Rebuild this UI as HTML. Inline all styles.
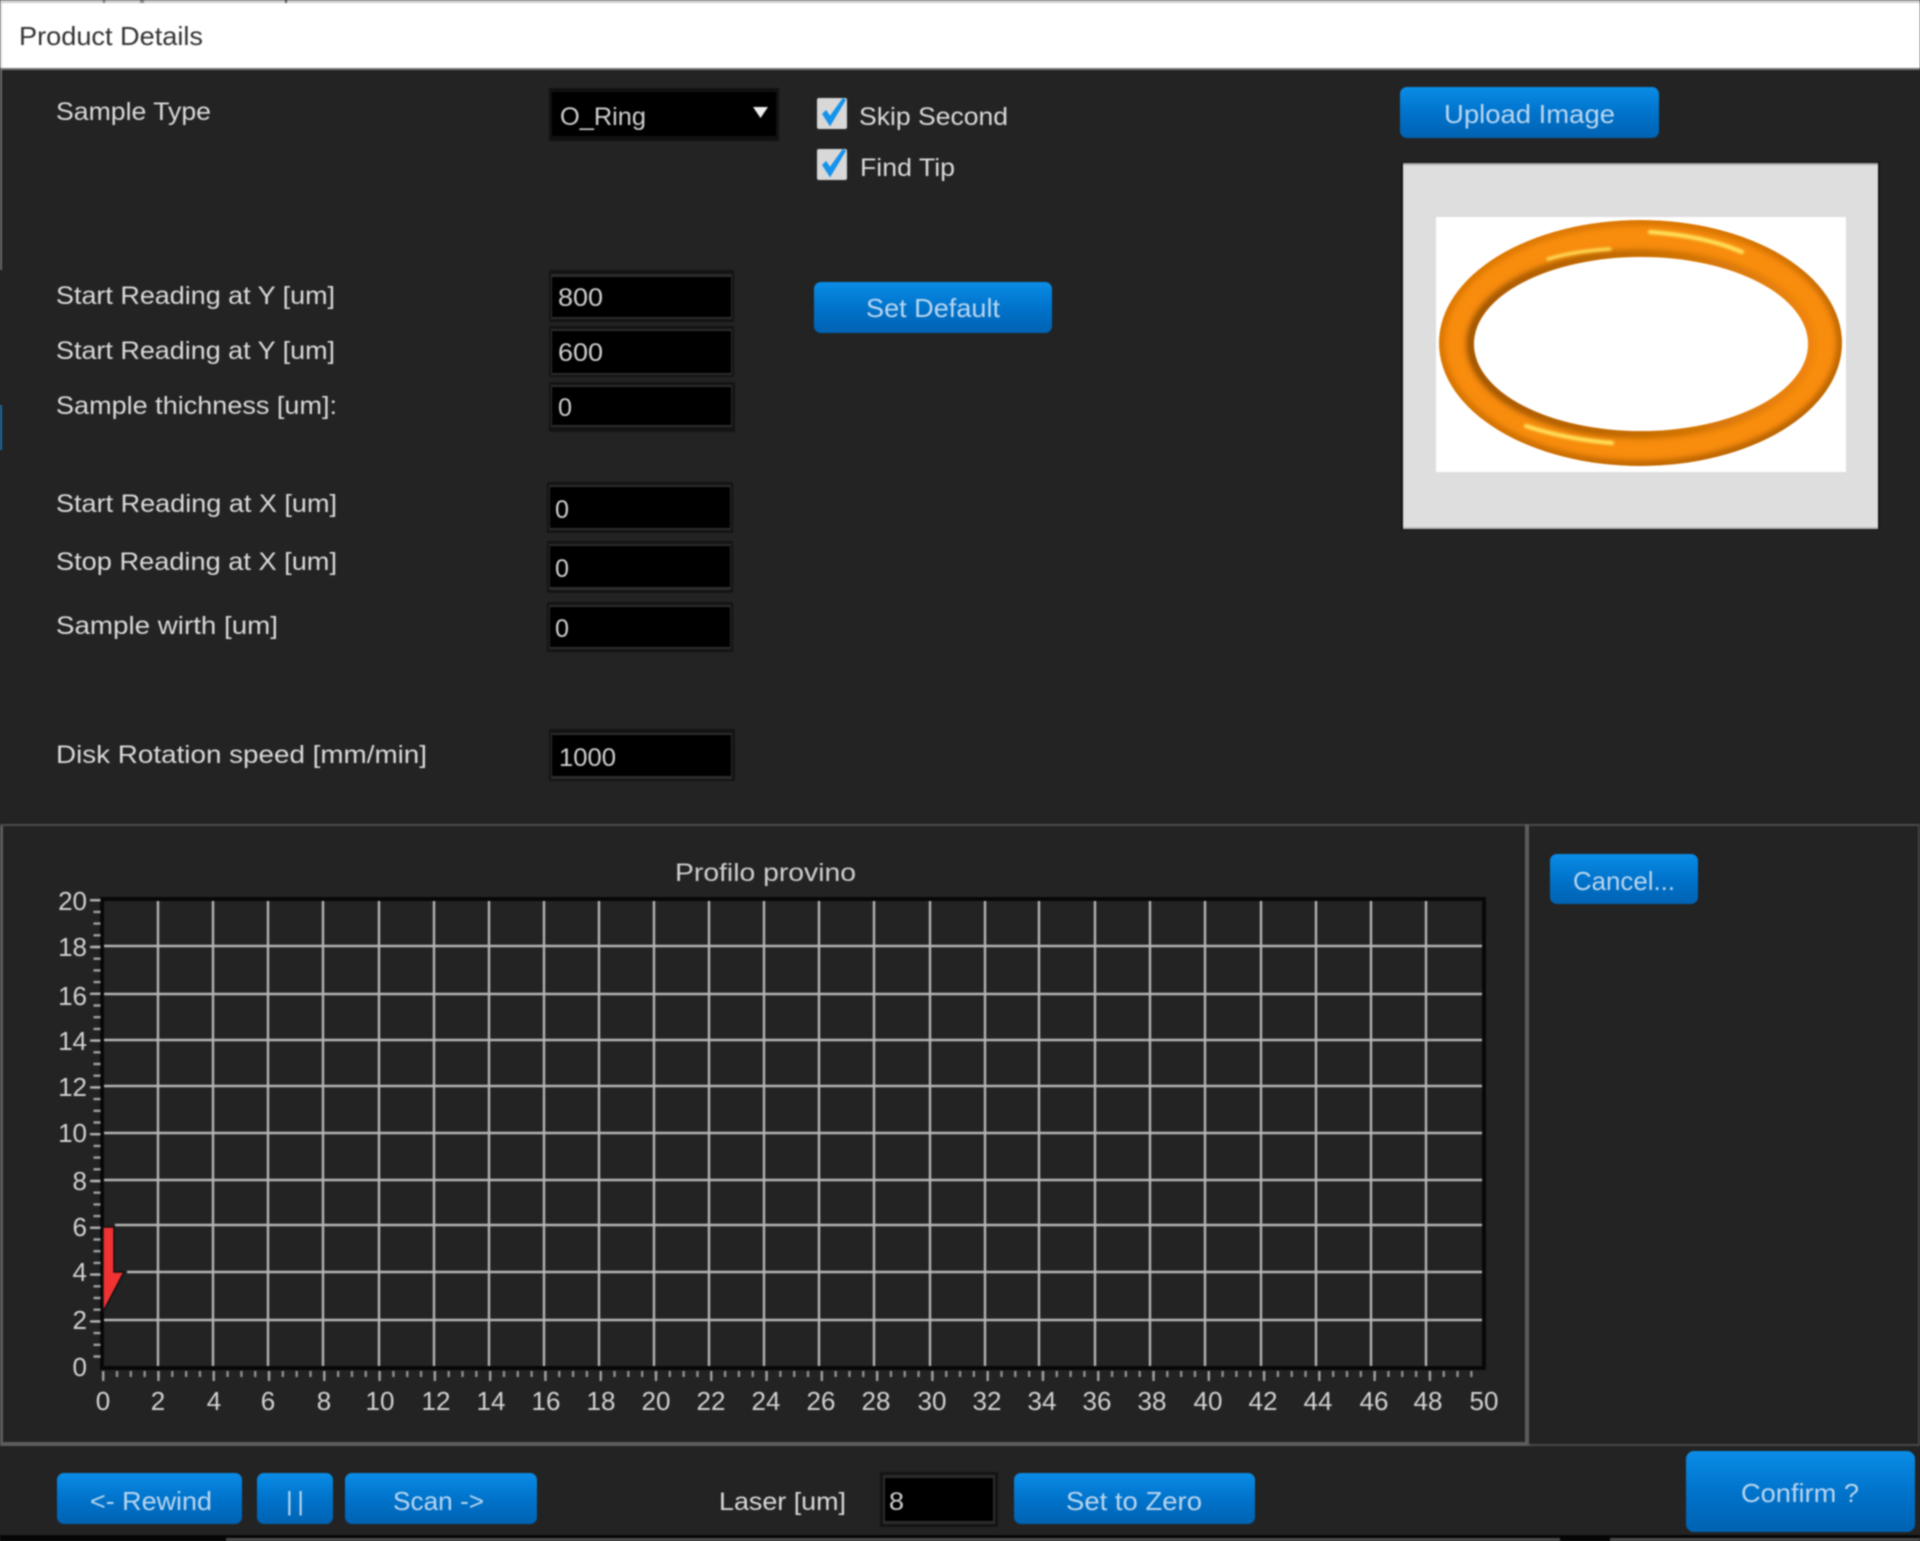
<!DOCTYPE html>
<html lang="en">
<head>
<meta charset="utf-8">
<title>Product Details</title>
<style>
html,body{margin:0;padding:0;background:#232323;width:1920px;height:1541px;overflow:hidden}
svg{display:block;filter:blur(.9px)}
text{font-family:"Liberation Sans",sans-serif}
.l{font-size:25px;fill:#dadada}
.i{font-size:25px;fill:#d0d0d0}
.b{font-size:26px;fill:#b9d6f0}
.t{font-size:26px;fill:#d2d2d2}
.m{text-anchor:middle}
.e{text-anchor:end}
</style>
</head>
<body>
<svg width="1920" height="1541" viewBox="0 0 1920 1541" xmlns="http://www.w3.org/2000/svg">
<defs>
<linearGradient id="bt" x1="0" y1="0" x2="0" y2="1">
<stop offset="0" stop-color="#0a8ce6"/><stop offset=".5" stop-color="#0073cb"/><stop offset="1" stop-color="#0062b2"/>
</linearGradient>
<linearGradient id="outerShade" x1="0" y1="0" x2="1" y2="1">
<stop offset="0" stop-color="#e07a07"/><stop offset=".5" stop-color="#cf7006"/><stop offset="1" stop-color="#a85a04"/>
</linearGradient>
<linearGradient id="innerShade" x1="0" y1="0" x2="1" y2="0">
<stop offset="0" stop-color="#9c5203"/><stop offset=".5" stop-color="#c06a05"/><stop offset="1" stop-color="#ee8409"/>
</linearGradient>
<clipPath id="ringClip"><ellipse cx="1640.5" cy="343" rx="201.5" ry="123"/></clipPath>
<filter id="sf" x="-20%" y="-300%" width="140%" height="700%"><feGaussianBlur stdDeviation="1.4"/></filter>
<filter id="rb" x="-10%" y="-10%" width="120%" height="120%"><feGaussianBlur stdDeviation="3"/></filter>
</defs>
<rect width="1920" height="1541" fill="#232323"/>

<!-- title bar -->
<rect x="0" y="0" width="1920" height="4" fill="#cfcfcf"/>
<rect x="103" y="0" width="2" height="3" fill="#777"/><rect x="140" y="0" width="4" height="3" fill="#888"/><rect x="285" y="0" width="2" height="3" fill="#555"/>
<rect x="2" y="3" width="1918" height="65" fill="#fff"/>
<rect x="0" y="3" width="2" height="65" fill="#ddd"/>
<rect x="0" y="68" width="1920" height="2" fill="#777"/>
<text x="19" y="45" style="font-size:26px;fill:#333" textLength="184" lengthAdjust="spacingAndGlyphs">Product Details</text>
<rect x="0" y="70" width="2" height="200" fill="#6a6a6a"/>
<rect x="0" y="405" width="2" height="45" fill="#1c6ea4"/>

<!-- labels -->
<text class="l" x="56" y="120" textLength="155" lengthAdjust="spacingAndGlyphs">Sample Type</text>
<text class="l" x="56" y="304" textLength="279" lengthAdjust="spacingAndGlyphs">Start Reading at Y [um]</text>
<text class="l" x="56" y="359" textLength="279" lengthAdjust="spacingAndGlyphs">Start Reading at Y [um]</text>
<text class="l" x="56" y="414" textLength="281" lengthAdjust="spacingAndGlyphs">Sample thichness [um]:</text>
<text class="l" x="56" y="512" textLength="281" lengthAdjust="spacingAndGlyphs">Start Reading at X [um]</text>
<text class="l" x="56" y="570" textLength="281" lengthAdjust="spacingAndGlyphs">Stop Reading at X [um]</text>
<text class="l" x="56" y="634" textLength="222" lengthAdjust="spacingAndGlyphs">Sample wirth [um]</text>
<text class="l" x="56" y="763" textLength="371" lengthAdjust="spacingAndGlyphs">Disk Rotation speed [mm/min]</text>

<!-- combo -->
<rect x="549" y="88" width="230" height="53" fill="#111"/>
<rect x="552" y="92" width="224" height="44" fill="#000"/>
<text class="i" x="560" y="125" textLength="86" lengthAdjust="spacingAndGlyphs">O_Ring</text>
<path d="M753 107H768L760.5 118Z" fill="#eee"/>

<!-- inputs -->
<g fill="#141414">
<rect x="549" y="270" width="185" height="52"/>
<rect x="549" y="326" width="185" height="51"/>
<rect x="549" y="382" width="186" height="50"/>
<rect x="547" y="482" width="186" height="51"/>
<rect x="547" y="541" width="186" height="52"/>
<rect x="547" y="602" width="186" height="50"/>
<rect x="549" y="729" width="186" height="52"/>
<rect x="880" y="1472" width="118" height="55"/>
</g>
<g fill="#2c2c2c">
<rect x="551" y="274" width="181" height="45"/>
<rect x="551" y="329" width="181" height="46"/>
<rect x="551" y="385" width="181" height="42"/>
<rect x="549" y="485" width="182" height="45"/>
<rect x="549" y="544" width="182" height="46"/>
<rect x="549" y="605" width="182" height="44"/>
<rect x="551" y="733" width="181" height="46"/>
<rect x="883" y="1475" width="112" height="49"/>
</g>
<g fill="#000">
<rect x="552" y="277" width="179" height="40"/>
<rect x="552" y="331" width="179" height="42"/>
<rect x="552" y="387" width="179" height="38"/>
<rect x="550" y="487" width="180" height="41"/>
<rect x="550" y="546" width="180" height="41"/>
<rect x="550" y="607" width="180" height="40"/>
<rect x="552" y="735" width="179" height="41"/>
<rect x="885" y="1478" width="108" height="43"/>
</g>
<text class="i" x="558" y="306" textLength="45" lengthAdjust="spacingAndGlyphs">800</text>
<text class="i" x="558" y="361" textLength="45" lengthAdjust="spacingAndGlyphs">600</text>
<text class="i" x="558" y="416" textLength="14" lengthAdjust="spacingAndGlyphs">0</text>
<text class="i" x="555" y="518" textLength="14" lengthAdjust="spacingAndGlyphs">0</text>
<text class="i" x="555" y="577" textLength="14" lengthAdjust="spacingAndGlyphs">0</text>
<text class="i" x="555" y="637" textLength="14" lengthAdjust="spacingAndGlyphs">0</text>
<text class="i" x="559" y="766" textLength="57" lengthAdjust="spacingAndGlyphs">1000</text>
<text class="i" x="889" y="1510" textLength="15" lengthAdjust="spacingAndGlyphs">8</text>

<!-- checkboxes -->
<rect x="817" y="98" width="30" height="31" rx="2" fill="#d8d8d8"/>
<rect x="817" y="149" width="30" height="31" rx="2" fill="#d8d8d8"/>
<path d="M823 114L830 125L845 100L843 99L830 117L826 111Z" fill="#1492ec" stroke="#1492ec" stroke-width="1.5"/>
<path d="M823 165L830 176L845 151L843 150L830 168L826 162Z" fill="#1492ec" stroke="#1492ec" stroke-width="1.5"/>
<text class="l" x="859" y="125" textLength="149" lengthAdjust="spacingAndGlyphs">Skip Second</text>
<text class="l" x="860" y="176" textLength="95" lengthAdjust="spacingAndGlyphs">Find Tip</text>

<!-- buttons -->
<g fill="url(#bt)">
<rect x="814" y="282" width="238" height="51" rx="7"/>
<rect x="1400" y="87" width="259" height="51" rx="7"/>
<rect x="1550" y="854" width="148" height="50" rx="7"/>
<rect x="57" y="1473" width="185" height="51" rx="7"/>
<rect x="257" y="1473" width="76" height="51" rx="7"/>
<rect x="345" y="1473" width="192" height="51" rx="7"/>
<rect x="1014" y="1473" width="241" height="51" rx="7"/>
<rect x="1686" y="1451" width="229" height="81" rx="8"/>
</g>
<text class="b" x="866" y="317" textLength="134" lengthAdjust="spacingAndGlyphs">Set Default</text>
<text class="b" x="1444" y="123" textLength="171" lengthAdjust="spacingAndGlyphs">Upload Image</text>
<text class="b" x="1573" y="890" textLength="102" lengthAdjust="spacingAndGlyphs">Cancel...</text>
<text class="b" x="90" y="1510" textLength="122" lengthAdjust="spacingAndGlyphs">&lt;- Rewind</text>
<text class="b" x="286" y="1510" textLength="18" lengthAdjust="spacing">| |</text>
<text class="b" x="393" y="1510" textLength="91" lengthAdjust="spacingAndGlyphs">Scan -&gt;</text>
<text class="b" x="1066" y="1510" textLength="136" lengthAdjust="spacingAndGlyphs">Set to Zero</text>
<text class="b" x="1741" y="1502" textLength="118" lengthAdjust="spacingAndGlyphs">Confirm ?</text>
<text class="l" x="719" y="1510" textLength="127" lengthAdjust="spacingAndGlyphs">Laser [um]</text>

<!-- image box -->
<rect x="1401" y="162" width="479" height="368" fill="#151515"/>
<rect x="1403" y="163" width="475" height="366" fill="#dedede"/>
<rect x="1403" y="163" width="475" height="2" fill="#aaa"/>
<rect x="1403" y="527" width="475" height="2" fill="#bbb"/>
<rect x="1436" y="217" width="410" height="255" fill="#fff"/>
<g clip-path="url(#ringClip)">
<ellipse cx="1640.5" cy="343" rx="201.5" ry="123" fill="#f88c0d"/>
<ellipse cx="1640.5" cy="343" rx="200" ry="121.5" fill="none" stroke="url(#outerShade)" stroke-width="8" filter="url(#rb)"/>
<ellipse cx="1641" cy="344" rx="170" ry="90" fill="none" stroke="url(#innerShade)" stroke-width="9" filter="url(#rb)"/>
<g fill="none" stroke="#ffe860" stroke-linecap="round" filter="url(#sf)">
<path d="M1650 232Q1705 236 1742 252" stroke-width="4"/>
<path d="M1548 259Q1575 251 1610 249" stroke-width="3"/>
<path d="M1526 426Q1565 439 1612 443" stroke-width="4"/>
</g>
</g>
<ellipse cx="1641" cy="344" rx="167" ry="87" fill="#fff"/>

<!-- panel separators -->
<rect x="0" y="824" width="1920" height="2" fill="#4a4a4a"/>
<rect x="0" y="826" width="3" height="619" fill="#5c5c5c"/>
<rect x="0" y="1442" width="1527" height="4" fill="#5c5c5c"/>
<rect x="1525" y="824" width="4" height="622" fill="#5c5c5c"/>
<rect x="1529" y="1444" width="391" height="2" fill="#484848"/>
<rect x="1918" y="824" width="2" height="622" fill="#444"/>

<!-- chart -->
<text x="675" y="881" style="font-size:25px;fill:#cfcfcf" textLength="181" lengthAdjust="spacingAndGlyphs">Profilo provino</text>
<path d="M158 899V1366M213 899V1366M268 899V1366M323 899V1366M379 899V1366M434 899V1366M489 899V1366M544 899V1366M599 899V1366M654 899V1366M709 899V1366M764 899V1366M819 899V1366M874 899V1366M930 899V1366M985 899V1366M1039 899V1366M1095 899V1366M1150 899V1366M1205 899V1366M1261 899V1366M1316 899V1366M1371 899V1366M1426 899V1366" stroke="#b4b4b4" stroke-width="2.4" fill="none"/>
<path d="M104 946H1483M104 994H1483M104 1040H1483M104 1086H1483M104 1133H1483M104 1180H1483M115 1225H1483M127 1272H1483M104 1320H1483" stroke="#b4b4b4" stroke-width="2.4" fill="none"/>
<path d="M102 899V1368H1484V899Z" fill="none" stroke="#080808" stroke-width="4"/>
<!-- ticks -->
<line x1="97" y1="899" x2="97" y2="1367" stroke="#a0a0a0" stroke-width="7" stroke-dasharray="2.4 9.3"/>
<line x1="95" y1="899" x2="95" y2="1367" stroke="#b0b0b0" stroke-width="10" stroke-dasharray="2.4 44.4"/>
<line x1="102" y1="1374" x2="1484" y2="1374" stroke="#909090" stroke-width="6" stroke-dasharray="2.4 11.42"/>
<line x1="102" y1="1376" x2="1484" y2="1376" stroke="#a0a0a0" stroke-width="10" stroke-dasharray="2.4 52.88"/>
<!-- pointer -->
<path d="M103 1227H114V1272H124L103 1312Z" fill="#f03232" stroke="#111" stroke-width="1.5"/>
<!-- y labels -->
<g>
<text class="t e" x="87" y="910">20</text>
<text class="t e" x="87" y="956">18</text>
<text class="t e" x="87" y="1005">16</text>
<text class="t e" x="87" y="1050">14</text>
<text class="t e" x="87" y="1096">12</text>
<text class="t e" x="87" y="1142">10</text>
<text class="t e" x="87" y="1190">8</text>
<text class="t e" x="87" y="1236">6</text>
<text class="t e" x="87" y="1281">4</text>
<text class="t e" x="87" y="1329">2</text>
<text class="t e" x="87" y="1376">0</text>
</g>
<!-- x labels -->
<g>
<text class="t m" x="103" y="1410">0</text>
<text class="t m" x="158" y="1410">2</text>
<text class="t m" x="214" y="1410">4</text>
<text class="t m" x="268" y="1410">6</text>
<text class="t m" x="324" y="1410">8</text>
<text class="t m" x="380" y="1410">10</text>
<text class="t m" x="436" y="1410">12</text>
<text class="t m" x="491" y="1410">14</text>
<text class="t m" x="546" y="1410">16</text>
<text class="t m" x="601" y="1410">18</text>
<text class="t m" x="656" y="1410">20</text>
<text class="t m" x="711" y="1410">22</text>
<text class="t m" x="766" y="1410">24</text>
<text class="t m" x="821" y="1410">26</text>
<text class="t m" x="876" y="1410">28</text>
<text class="t m" x="932" y="1410">30</text>
<text class="t m" x="987" y="1410">32</text>
<text class="t m" x="1042" y="1410">34</text>
<text class="t m" x="1097" y="1410">36</text>
<text class="t m" x="1152" y="1410">38</text>
<text class="t m" x="1208" y="1410">40</text>
<text class="t m" x="1263" y="1410">42</text>
<text class="t m" x="1318" y="1410">44</text>
<text class="t m" x="1374" y="1410">46</text>
<text class="t m" x="1428" y="1410">48</text>
<text class="t m" x="1484" y="1410">50</text>
</g>

<!-- bottom strip -->
<rect x="0" y="1535" width="1920" height="6" fill="#060606"/>
<rect x="226" y="1538" width="1334" height="3" fill="#4c4c4c"/>
<rect x="1610" y="1538" width="310" height="3" fill="#4c4c4c"/>
</svg>
</body>
</html>
